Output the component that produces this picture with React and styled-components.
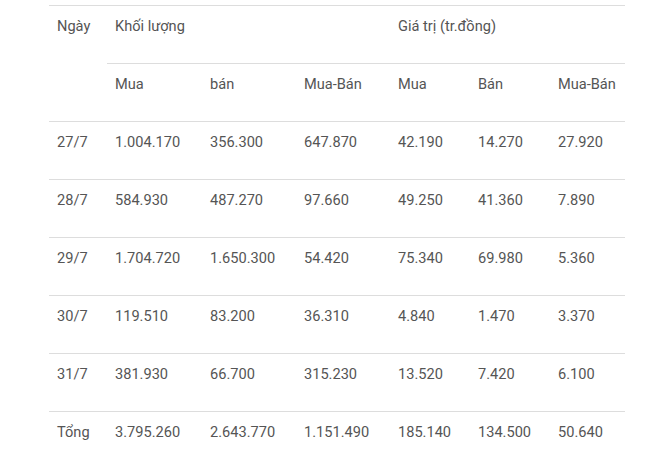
import React from "react";
import styled, { createGlobalStyle } from "styled-components";

const Global = createGlobalStyle`
  html, body { margin: 0; padding: 0; background: #fff; }
  body { font-family: Roboto, "Noto Sans", Arial, sans-serif; }
`;

const Wrap = styled.div`
  padding: 5px 0 0 49px;
`;

const Table = styled.table`
  width: 576px;
  border-collapse: collapse;
  table-layout: fixed;
  font-size: 14.6px;
  color: #555;
`;

const Row = styled.tr`
  border-top: 1px solid #dddddd;
`;

const Cell = styled.td`
  padding: 10px 8px 27px;
  line-height: 20px;
  vertical-align: top;
  text-align: left;
  font-weight: 400;
  white-space: nowrap;
`;

const HeadCell = styled(Cell).attrs({ as: "th" })``;

const widths = [58, 95, 94, 94, 80, 80, 75];

const data = [
  ["27/7", "1.004.170", "356.300", "647.870", "42.190", "14.270", "27.920"],
  ["28/7", "584.930", "487.270", "97.660", "49.250", "41.360", "7.890"],
  ["29/7", "1.704.720", "1.650.300", "54.420", "75.340", "69.980", "5.360"],
  ["30/7", "119.510", "83.200", "36.310", "4.840", "1.470", "3.370"],
  ["31/7", "381.930", "66.700", "315.230", "13.520", "7.420", "6.100"],
  ["Tổng", "3.795.260", "2.643.770", "1.151.490", "185.140", "134.500", "50.640"],
];

export default function App() {
  return (
    <>
      <Global />
      <Wrap>
        <Table>
          <colgroup>
            {widths.map((w, i) => (
              <col key={i} style={{ width: w }} />
            ))}
          </colgroup>
          <thead>
            <Row>
              <HeadCell rowSpan={2}>Ngày</HeadCell>
              <HeadCell colSpan={3}>Khối lượng</HeadCell>
              <HeadCell colSpan={3}>Giá trị (tr.đồng)</HeadCell>
            </Row>
            <Row>
              <HeadCell>Mua</HeadCell>
              <HeadCell>bán</HeadCell>
              <HeadCell>Mua-Bán</HeadCell>
              <HeadCell>Mua</HeadCell>
              <HeadCell>Bán</HeadCell>
              <HeadCell>Mua-Bán</HeadCell>
            </Row>
          </thead>
          <tbody>
            {data.map((r) => (
              <Row key={r[0]}>
                {r.map((c, i) => (
                  <Cell key={i}>{c}</Cell>
                ))}
              </Row>
            ))}
          </tbody>
        </Table>
      </Wrap>
    </>
  );
}
